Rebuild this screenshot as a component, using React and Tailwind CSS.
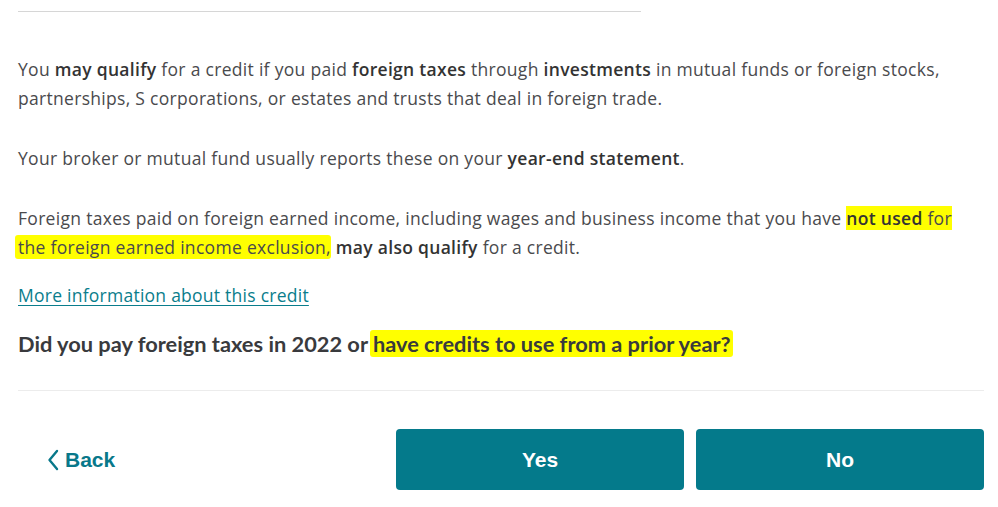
import React from 'react';

const Mark = ({ children, className = '' }) => (
  <span className={`bg-[#ffff00] ${className}`}>{children}</span>
);

const App = () => {
  return (
    <div className="w-[998px] h-[507px] bg-white overflow-hidden font-['Open_Sans','Noto_Sans',sans-serif] text-[#4a4a4d]">
      <div className="pl-[18px] pr-[14px]">
        <div className="w-[623px] h-px bg-[#d6d6d6] mt-[11px]" />

        <div className="text-[17.5px] leading-[29px] tracking-[0.3px]">
          <p className="mt-[43px]">
            You <b className="text-[#333] font-semibold">may qualify</b> for a credit if you paid{' '}
            <b className="text-[#333] font-semibold">foreign taxes</b> through{' '}
            <b className="text-[#333] font-semibold">investments</b> in mutual funds or foreign stocks,
            <br />
            partnerships, S corporations, or estates and trusts that deal in foreign trade.
          </p>

          <p className="mt-[31px]">
            Your broker or mutual fund usually reports these on your{' '}
            <b className="text-[#333] font-semibold">year-end statement</b>.
          </p>

          <p className="mt-[31px] whitespace-nowrap">
            Foreign taxes paid on foreign earned income, including wages and business income that you have{' '}
            <Mark>
              <b className="text-[#333] font-semibold">not used</b> for
            </Mark>
            <br />
            <Mark className="-ml-[3px] pl-[3px] rounded-[3px]">the foreign earned income exclusion,</Mark>{' '}
            <b className="text-[#333] font-semibold">may also qualify</b> for a credit.
          </p>

          <a href="#" className="block mt-[19px] w-fit text-[#0a7d8c] underline underline-offset-[3px] tracking-[0.25px]">
            More information about this credit
          </a>
        </div>

        <p className="mt-[20px] text-[21.8px] leading-[28px] font-bold text-[#393a3d] font-['Lato',sans-serif]">
          Did you pay foreign taxes in 2022 or{' '}
          <Mark className="-ml-[3px] pl-[3px] pr-[2px] rounded-[3px]">have credits to use from a prior year?</Mark>
        </p>

        <div className="h-px bg-[#ececec] mt-[32px]" />

        <div className="flex items-center mt-[38px]">
          <button className="flex items-center gap-[6px] ml-[29px] text-[#08788a] font-['Liberation_Sans',sans-serif] font-bold text-[21px]">
            <svg width="12" height="22" viewBox="0 0 12 22" fill="none">
              <path d="M10 2L2.5 11L10 20" stroke="#08788a" strokeWidth="2.4" strokeLinecap="round" strokeLinejoin="round" />
            </svg>
            Back
          </button>
          <div className="flex gap-[12px] ml-auto">
            <button className="w-[288px] h-[61px] rounded-[4px] bg-[#047a8b] text-white font-['Liberation_Sans',sans-serif] font-bold text-[21px]">
              Yes
            </button>
            <button className="w-[288px] h-[61px] rounded-[4px] bg-[#047a8b] text-white font-['Liberation_Sans',sans-serif] font-bold text-[21px]">
              No
            </button>
          </div>
        </div>
      </div>
    </div>
  );
};

export default App;
